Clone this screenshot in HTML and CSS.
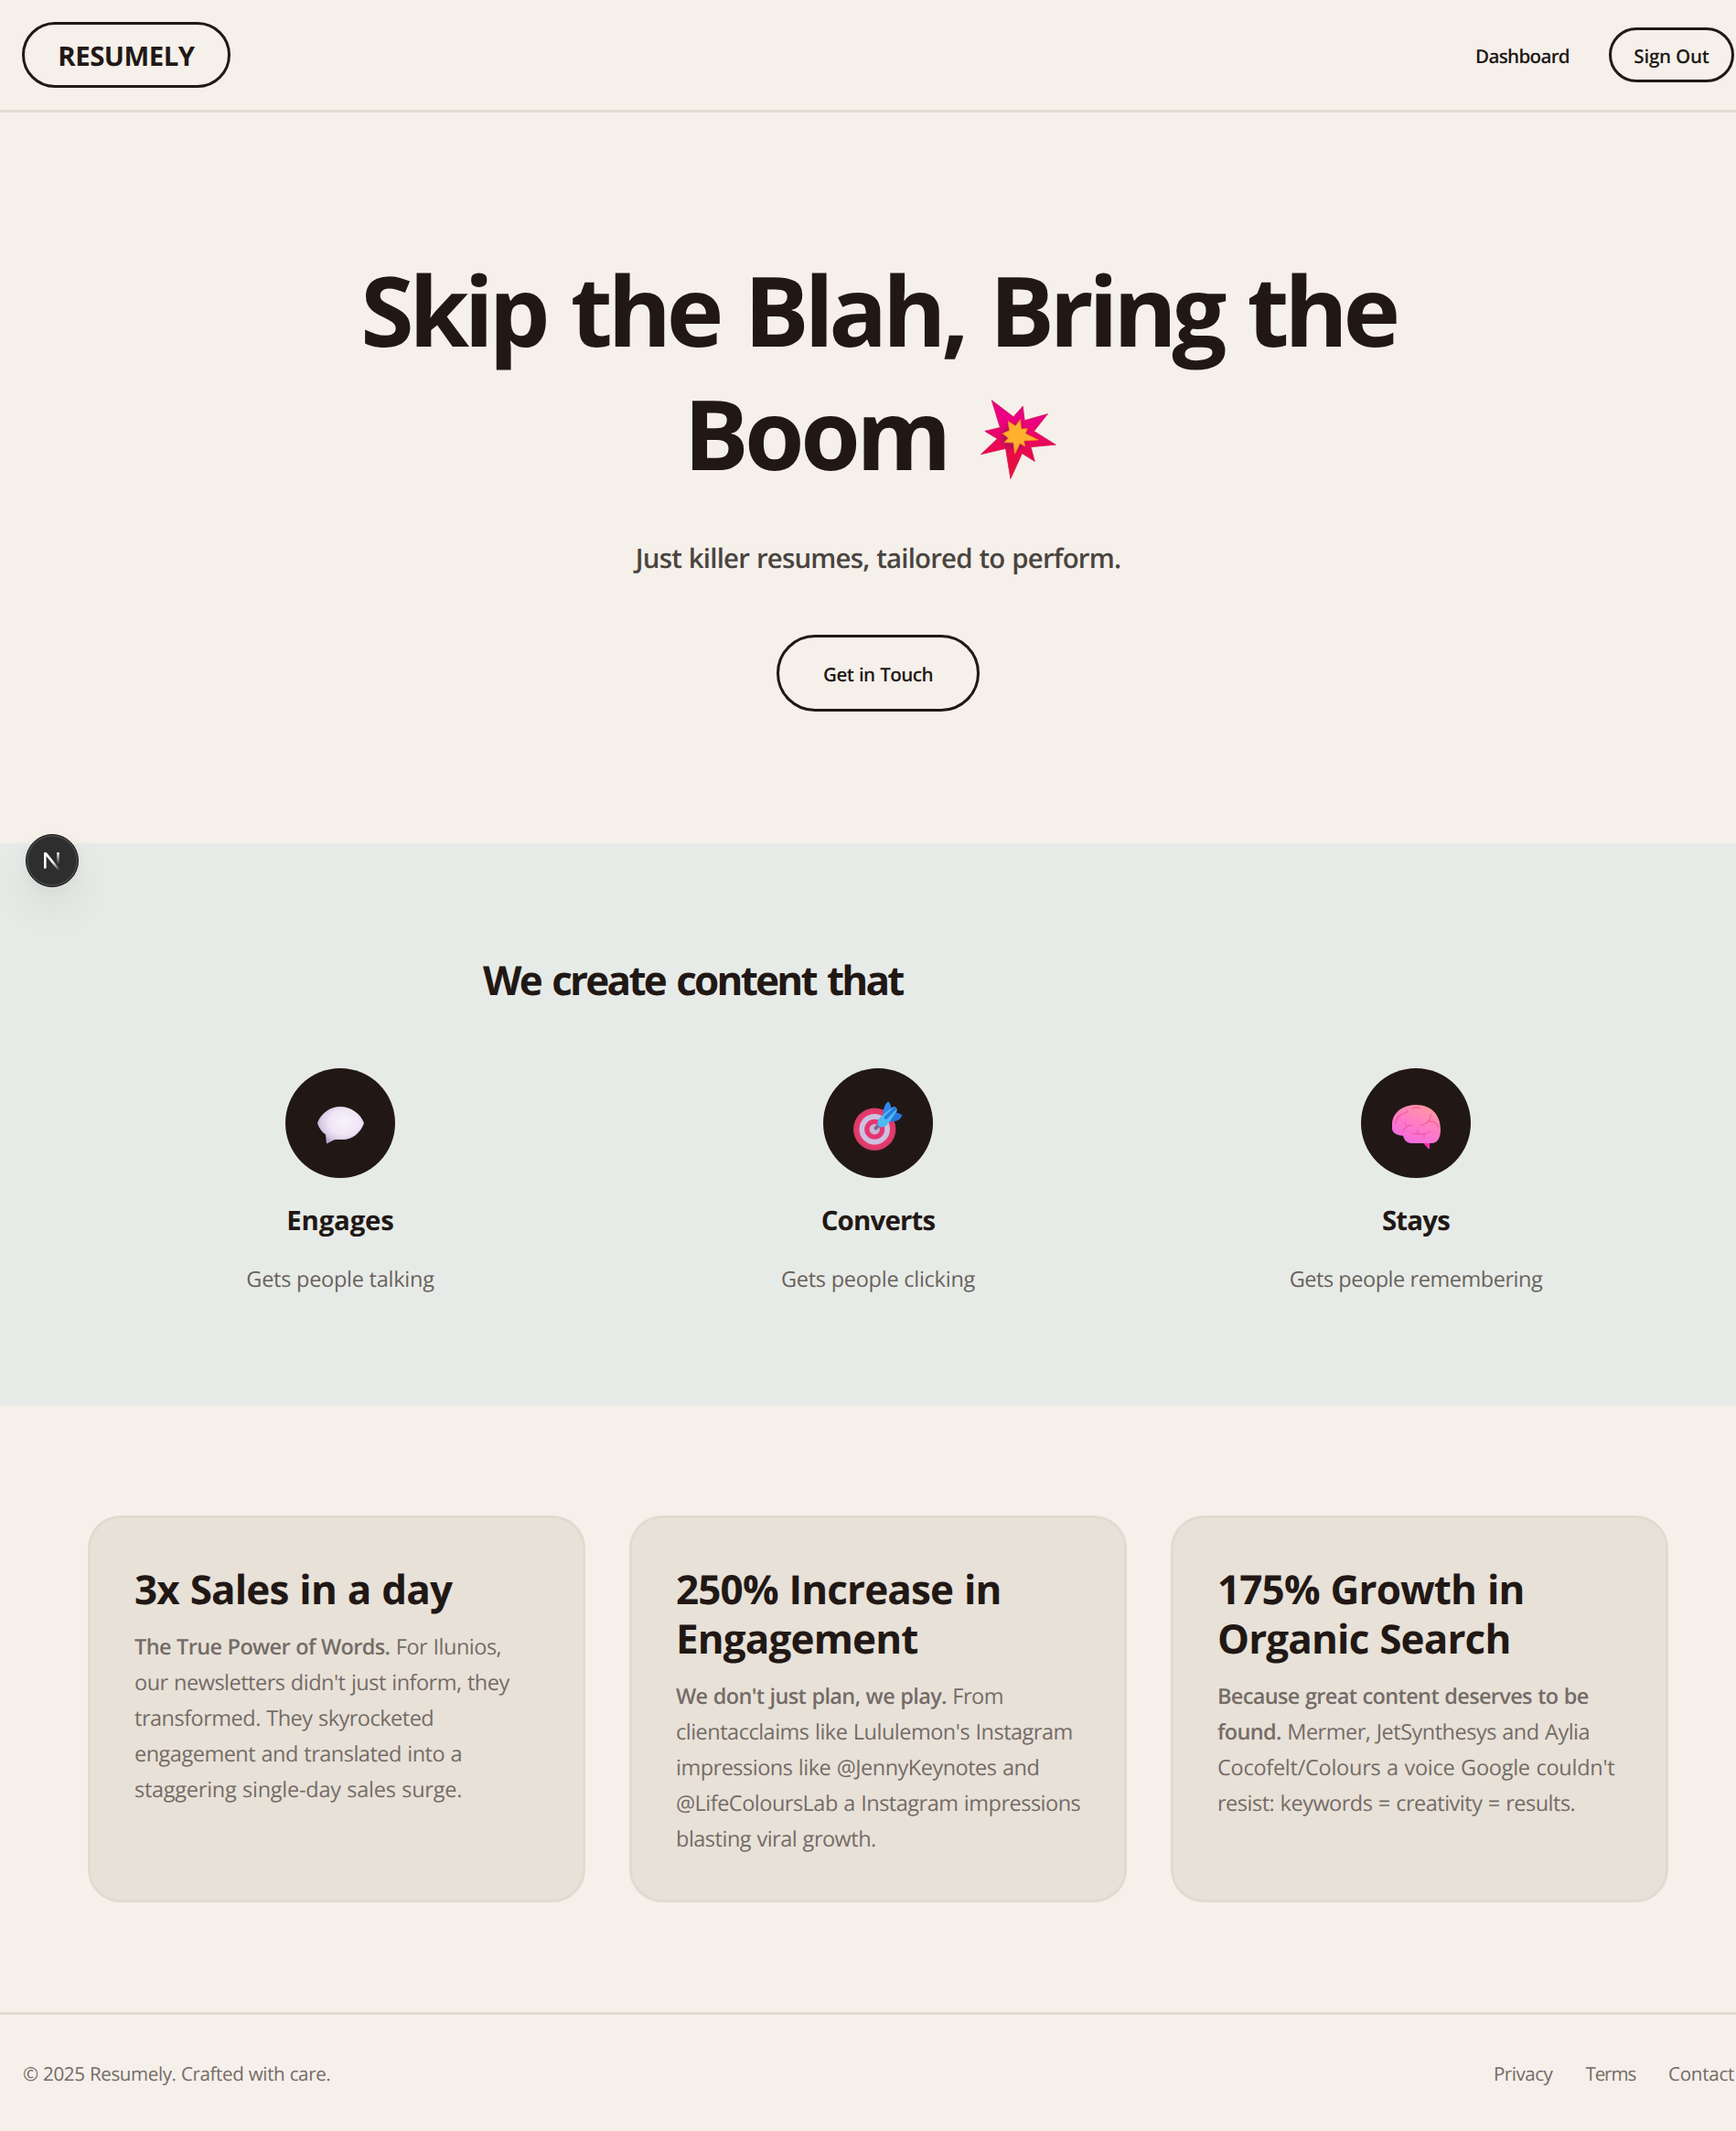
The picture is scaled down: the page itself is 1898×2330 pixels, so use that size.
FILE: index.html
```
<!DOCTYPE html>
<html lang="en">
<head>
<meta charset="utf-8">
<title>Resumely</title>
<link rel="stylesheet" href="styles.css">
</head>
<body>
<div class="page">
  <header class="header">
    <a class="logo">RESUMELY</a>
    <nav class="nav">
      <a class="nav-link">Dashboard</a>
      <a class="sign-out">Sign Out</a>
    </nav>
  </header>

  <section class="hero">
    <h1 class="hero-title">Skip the Blah, Bring the<br><span class="boom-word">Boom</span> <svg class="boom" viewBox="0 0 83 87" aria-hidden="true">
      <defs>
        <linearGradient id="boomOuter" x1="0" y1="0" x2="0" y2="1"><stop offset="0" stop-color="#e6007e"/><stop offset=".25" stop-color="#ec0082"/><stop offset=".65" stop-color="#ea0a4c"/><stop offset="1" stop-color="#e3142c"/></linearGradient>
        <radialGradient id="boomShade" gradientUnits="userSpaceOnUse" cx="37" cy="41" r="20"><stop offset="0" stop-color="#8c1050"/><stop offset=".6" stop-color="#b01055" stop-opacity=".7"/><stop offset="1" stop-color="#e00560" stop-opacity="0"/></radialGradient>
      </defs>
      <path fill="url(#boomOuter)" stroke="#cf1858" stroke-width=".8" stroke-linejoin="round" d="M12.2.6 36 18.7 46.3 7.2 48.2 22.7 73.5 15.6 58.5 34.4 82.2 49.2 55 51.7 59.3 67.5 45.5 58.7 32.9 86.4 27.5 53.4.5 59.7 18.4 42.7 4.8 34.4 21.4 30.4Z"/>
      <path fill="url(#boomShade)" d="M36 18.7 48.2 22.7 58.5 34.4 55 51.7 45.5 58.7 27.5 53.4 18.4 42.7 21.4 30.4Z"/>
      <path fill="#ffb02e" stroke="#f98a1c" stroke-width=".8" stroke-linejoin="round" d="M30.2 23.7 38.3 28.7 43.6 21.7 44.4 32 51.3 31.7 49 37 63.3 44 47.4 45 48.6 51 43.2 47.7 37.5 59.2 36 47 26 46.7 30.6 42 24.3 37 31.7 33.7Z"/>
    </svg></h1>
    <p class="hero-sub">Just killer resumes, tailored to perform.</p>
    <a class="cta">Get in Touch</a>
  </section>

  <section class="features">
    <h2 class="features-title">We create content that</h2>
    <div class="feature-grid">
      <div class="feature">
        <svg class="feature-icon" viewBox="0 0 120 120" aria-hidden="true">
          <defs>
            <radialGradient id="bubble" cx=".58" cy=".42" r=".6"><stop offset="0" stop-color="#f8f4fb"/><stop offset=".55" stop-color="#efe6f5"/><stop offset=".85" stop-color="#d6cae4"/><stop offset="1" stop-color="#b9a8d6"/></radialGradient>
          </defs>
          <path fill="url(#bubble)" d="M35 60C39 49 49 42 60 42S82 49 86 60C82 71 73 78 63 78 59 78.3 56 77.6 53.5 78.3L45 82.5 44 72.5C40 70 37 66 35 60Z"/>
        </svg>
        <h3 class="feature-name engages">Engages</h3>
        <p class="feature-text">Gets people talking</p>
      </div>
      <div class="feature">
        <svg class="feature-icon" viewBox="0 0 120 120" aria-hidden="true">
          <circle cx="56.2" cy="66.7" r="23.2" fill="#d63c66"/>
          <circle cx="56.2" cy="66.9" r="20.5" fill="#e63a6b"/>
          <circle cx="56.2" cy="66.7" r="16.8" fill="#cdc0e0"/>
          <circle cx="56.2" cy="66.7" r="11" fill="#e63670"/>
          <circle cx="56.2" cy="66.7" r="5.7" fill="#c6b8d6"/>
          <path d="M57.5 65.5 64 59.5" stroke="#7c6a8c" stroke-width="4" stroke-linecap="round"/>
          <path fill="#2f86ea" d="M65.5 53C65 46 67 39 71.2 36.2 74 39 74.8 43 74.4 47Z"/>
          <path fill="#2a74e0" d="M69 59.5 77.5 48.3C81.5 48.5 84.5 49.5 86.5 51.5 84.5 55.5 82 57.5 79 57.8Z"/>
          <path fill="#4fb9f3" d="M59.5 60C59.5 54 66 50.5 76 42.5 78.5 41.5 81.5 44 80.5 47 74.5 55 71 63.5 65.5 64.3 62 64.8 59.5 63.5 59.5 60Z"/>
          <path d="M68.5 54 78.5 44" stroke="#2878dc" stroke-width="3.6" stroke-linecap="round"/>
        </svg>
        <h3 class="feature-name">Converts</h3>
        <p class="feature-text">Gets people clicking</p>
      </div>
      <div class="feature">
        <svg class="feature-icon" viewBox="0 0 120 120" aria-hidden="true">
          <defs>
            <linearGradient id="brain" x1=".8" y1="0" x2=".25" y2="1"><stop offset="0" stop-color="#ff9d9c"/><stop offset=".45" stop-color="#ff7ec2"/><stop offset="1" stop-color="#f668e4"/></linearGradient>
          </defs>
          <path fill="#f72fb2" d="M67 80.5 73.5 88H75V80Z"/>
          <path fill="url(#brain)" d="M34 60C35 48 46 40 60 40 77 40 87 51 87 67 87 76 83.5 82 77 82H56C51 82 47.5 79.5 46 73.7 39 73.5 34 70.5 34 66Z"/>
          <g fill="none" stroke="#ec5597" stroke-width="1.2" stroke-opacity=".85" stroke-linecap="round">
            <path d="M37.5 61C38 54 43 49.5 49.5 48.5M49.5 48.5 51 46.5M56 44C58.5 42.5 62 42.5 64.5 44"/>
            <path d="M76.5 50C76 54.5 75 57 72.5 59.5M65.5 62.5C69 61.5 71.5 60.5 73 58C79 57.5 83 60 84.5 64.5"/>
            <path d="M46 69C48 64.5 51.5 62 55.5 62.5M49 62 48 60M55.5 71C62 72.5 70 72.5 75.5 69.5M62 71.5V67.5M69 72.5V76"/>
          </g>
        </svg>
        <h3 class="feature-name">Stays</h3>
        <p class="feature-text wide">Gets people remembering</p>
      </div>
    </div>
  </section>

  <section class="results">
    <article class="card">
      <h3 class="card-title">3x Sales in a day</h3>
      <p class="card-text"><strong>The True Power of Words.</strong> For Ilunios,<br>our newsletters didn't just inform, they<br>transformed. They skyrocketed<br>engagement and translated into a<br><span class="loose">staggering single-day sales surge.</span></p>
    </article>
    <article class="card">
      <h3 class="card-title">250% Increase in<br>Engagement</h3>
      <p class="card-text"><strong>We don't just plan, we play.</strong> From<br>clientacclaims like Lululemon's Instagram<br>impressions like @JennyKeynotes and<br>@LifeColoursLab a Instagram impressions<br>blasting viral growth.</p>
    </article>
    <article class="card">
      <h3 class="card-title">175% Growth in<br>Organic Search</h3>
      <p class="card-text"><strong>Because great content deserves to be<br>found.</strong> Mermer, JetSynthesys and Aylia<br><span class="loose">Cocofelt/Colours a voice Google couldn't</span><br>resist: keywords = creativity = results.</p>
    </article>
  </section>

  <footer class="footer">
    <p class="copyright">© 2025 Resumely. Crafted with care.</p>
    <nav class="footer-links"><a class="privacy">Privacy</a><a class="terms">Terms</a><a>Contact</a></nav>
  </footer>

  <div class="dev-badge">
    <svg width="22" height="24" viewBox="0 0 22 24" aria-hidden="true">
      <defs>
        <linearGradient id="nDiag" gradientUnits="userSpaceOnUse" x1="12" y1="13" x2="18.5" y2="21"><stop offset="0" stop-color="#fff"/><stop offset="1" stop-color="#fff" stop-opacity="0.1"/></linearGradient>
        <linearGradient id="nStem" x1="0" y1="0" x2="0" y2="1"><stop offset="0" stop-color="#fff"/><stop offset="1" stop-color="#fff" stop-opacity="0"/></linearGradient>
      </defs>
      <path fill="url(#nDiag)" d="M2 3H4.8L19.5 21.5 17.5 23 4.6 7V20.5H2Z"/>
      <path fill="url(#nStem)" d="M16.2 3H18.8V16H16.2Z"/>
    </svg>
  </div>
</div>
</body>
</html>
```
FILE: styles.css
```
* { box-sizing: border-box; margin: 0; padding: 0; }
html { overflow: hidden; background: #f5f0ea; }
body {
  width: 1898px;
  overflow: hidden;
  font-family: "Open Sans", "Noto Sans", sans-serif;
  color: #211815;
  text-rendering: geometricPrecision;
}
.page { position: relative; width: 1920px; background: #f5f0ea; }

.header {
  display: flex; align-items: center; justify-content: space-between;
  height: 123px; padding: 0 24px; border-bottom: 3px solid #e0dbd0;
}
.logo {
  display: flex; align-items: center; justify-content: center;
  width: 228px; height: 72px; padding-top: 1px;
  border: 3px solid #211815; border-radius: 36px;
  font-size: 29.4px; font-weight: 700; letter-spacing: -0.5px;
}
.nav { display: flex; align-items: center; gap: 43px; font-size: 20.6px; font-weight: 600; }
.nav-link { padding-top: 3px; letter-spacing: -0.7px; }
.sign-out {
  display: flex; align-items: center; justify-content: center;
  width: 137px; height: 60px; padding-top: 3px;
  border: 3px solid #211815; border-radius: 30px;
  letter-spacing: -0.25px;
}

.hero { display: flex; flex-direction: column; align-items: center; height: 799px; padding-top: 149px; }
.hero-title {
  font-size: 106px; line-height: 135px; font-weight: 700; letter-spacing: -5.4px; word-spacing: 5.5px;
  text-align: center; white-space: nowrap;
}
.boom-word { letter-spacing: -4.5px; }
.boom { width: 83px; height: 87px; margin: 0 18px 0 8px; vertical-align: -10px; }
.hero-sub {
  margin-top: 44px; font-size: 29.4px; line-height: 48px; font-weight: 600;
  letter-spacing: -0.8px; word-spacing: 1px; color: #4a4440;
}
.cta {
  display: flex; align-items: center; justify-content: center;
  width: 222px; height: 84px; margin-top: 60px; padding-top: 3px;
  border: 3px solid #211815; border-radius: 42px;
  font-size: 20.6px; font-weight: 600; letter-spacing: -0.6px; word-spacing: 1px;
}

.features { height: 615px; padding: 122px 96px 0; background: #e7ebe7; }
.features-title {
  margin-left: 432px; font-size: 44px; line-height: 54px; font-weight: 700;
  letter-spacing: -2.75px; word-spacing: 3.5px; white-space: nowrap;
}
.feature-grid { display: grid; grid-template-columns: repeat(3, 1fr); gap: 36px; margin-top: 70px; }
.feature { display: flex; flex-direction: column; align-items: center; }
.feature-icon { width: 120px; height: 120px; border-radius: 50%; background: #211815; }
.feature-name { margin-top: 25px; font-size: 29.4px; line-height: 42px; font-weight: 700; letter-spacing: -0.8px; }
.feature-name.engages { letter-spacing: -0.2px; }
.feature-text { margin-top: 24px; font-size: 23.5px; line-height: 39px; letter-spacing: -0.25px; color: #69625d; }
.feature-text.wide { letter-spacing: -0.45px; }

.results { display: grid; grid-template-columns: repeat(3, 1fr); gap: 48px; padding: 120px 96px; }
.card {
  height: 423px; padding: 50px 0 0 48px;
  border: 3px solid #e0dbd0; border-radius: 36px; background: #e8e1d8;
}
.card-title { font-size: 44px; line-height: 54px; font-weight: 700; letter-spacing: -0.85px; word-spacing: 1.2px; white-space: nowrap; }
.card-text { margin-top: 17px; font-size: 23.5px; line-height: 39px; letter-spacing: -0.5px; word-spacing: 0.8px; color: #746c67; white-space: nowrap; }
.card-text strong { font-weight: 600; letter-spacing: -0.65px; }
.loose { letter-spacing: -0.26px; }

.footer {
  display: flex; align-items: center; justify-content: space-between;
  height: 130px; padding: 2px 24px 0; border-top: 3px solid #e0dbd0;
  font-size: 20.6px; letter-spacing: -0.3px; color: #746c67;
}
.copyright { padding-left: 1px; letter-spacing: -0.4px; word-spacing: 0.4px; }
.footer-links { display: flex; gap: 36px; }
.privacy { letter-spacing: -0.5px; }
.terms { letter-spacing: -1.1px; }

.dev-badge {
  position: absolute; left: 28px; top: 912px;
  display: flex; align-items: center; justify-content: center;
  width: 58px; height: 58px; border-radius: 50%;
  background: #2e2e2e; border: 1.5px solid #141414;
  box-shadow: inset 0 0 0 1.5px #4c4c4c, 0 24px 48px -6px rgba(0, 0, 0, .1), 0 3px 12px rgba(0, 0, 0, .04);
}
```
